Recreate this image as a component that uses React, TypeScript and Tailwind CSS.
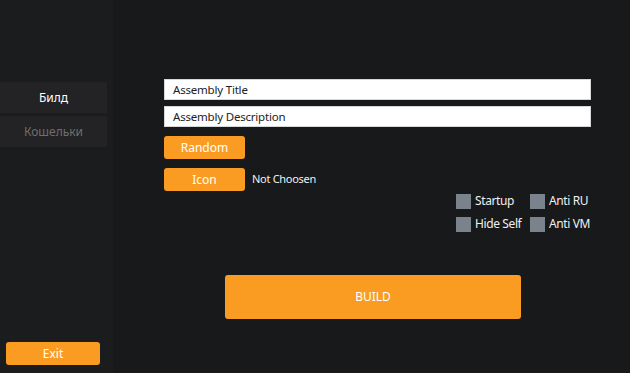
import { useState } from "react";

const font = { fontFamily: '"Noto Sans", "Open Sans", sans-serif' };

function Check({ label }: { label: string }) {
  const [on, setOn] = useState(false);
  return (
    <label className="flex items-center gap-[4px] cursor-pointer">
      <span
        onClick={() => setOn(!on)}
        className={`w-[15px] h-[15px] ${on ? "bg-[#fb9c22]" : "bg-[#7a828c]"}`}
      />
      <span className="text-[12px] text-[#f0f0f0] tracking-[-0.4px]">{label}</span>
    </label>
  );
}

export default function App() {
  const [tab, setTab] = useState(0);
  const tabs = ["Билд", "Кошельки"];

  return (
    <div className="w-[630px] h-[373px] flex bg-[#18191b]" style={font}>
      {/* Sidebar */}
      <div className="w-[113px] h-full flex flex-col bg-[#1b1c1e] pt-[82px] pb-[8px]">
        <div className="flex flex-col gap-[3px] w-[107px]">
          {tabs.map((t, i) => (
            <button
              key={t}
              onClick={() => setTab(i)}
              className={`h-[31px] bg-[#232325] text-[12px] ${
                tab === i ? "text-white" : "text-[#6e6e70]"
              }`}
            >
              {t}
            </button>
          ))}
        </div>
        <div className="mt-auto pl-[6px]">
          <button className="w-[94px] h-[23px] rounded-[3px] bg-[#fb9c22] text-white text-[12px]">
            Exit
          </button>
        </div>
      </div>

      {/* Main */}
      <div className="flex-1 pt-[79px] pl-[51px] pr-[39px]">
        <div className="flex flex-col gap-[6px]">
          <div className="h-[21px] bg-white border border-[#d5d7da] pl-[8px] flex items-center text-[11.5px] text-[#222] tracking-[-0.2px]">
            Assembly Title
          </div>
          <div className="h-[21px] bg-white border border-[#d5d7da] pl-[8px] flex items-center text-[11.5px] text-[#222] tracking-[-0.2px]">
            Assembly Description
          </div>
        </div>
        <button className="mt-[9px] w-[81px] h-[23px] rounded-[3px] bg-[#fb9c22] text-white text-[12px]">
          Random
        </button>
        <div className="mt-[9px] flex items-center gap-[7px]">
          <button className="w-[81px] h-[23px] rounded-[3px] bg-[#fb9c22] text-white text-[12px]">
            Icon
          </button>
          <span className="text-[11px] text-[#f0f0f0] tracking-[-0.3px]">Not Choosen</span>
        </div>
        <div className="flex justify-end mt-[1px]">
          <div className="grid grid-cols-[74px_auto] gap-y-[5px] mr-[1px]">
            <Check label="Startup" />
            <Check label="Anti RU" />
            <Check label="Hide Self" />
            <Check label="Anti VM" />
          </div>
        </div>
        <div className="mt-[42px] ml-[61px]">
          <button className="w-[296px] h-[44px] rounded-[3px] bg-[#fb9c22] text-white text-[12px]">
            BUILD
          </button>
        </div>
      </div>
    </div>
  );
}
